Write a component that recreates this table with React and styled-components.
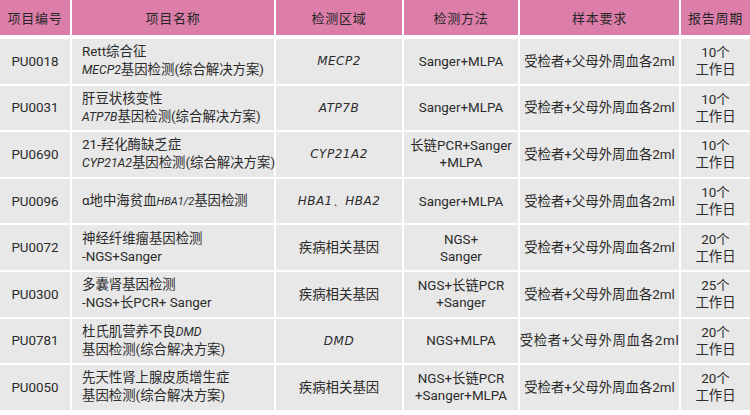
import * as React from 'react';
import styled, { createGlobalStyle } from 'styled-components';

const GlobalStyle = createGlobalStyle`
    html, body {
        margin: 0;
        padding: 0;
        background: #ffffff;
    }
    body {
        font-family: Roboto, "Noto Sans CJK SC", sans-serif;
        color: #2b2b2b;
    }
`;

const COLUMNS = '70px 202px 126px 114px 159px 69px';

const Page = styled.div`
    width: 750px;
    height: 415px;
    background: #ffffff;
    overflow: hidden;
`;

const Head = styled.div`
    display: grid;
    grid-template-columns: ${COLUMNS};
    column-gap: 2px;
    height: 35px;
`;

const HeadCell = styled.div`
    background: #dc7ea9;
    display: flex;
    align-items: center;
    justify-content: center;
    font-family: "Noto Sans CJK SC", sans-serif;
    font-size: 13px;
    font-weight: 400;
    letter-spacing: 0.8px;
    color: #262626;
`;

const Body = styled.div`
    margin-top: 4px;
    display: grid;
    grid-template-columns: ${COLUMNS};
    grid-auto-rows: 44.6px;
    gap: 2px;
`;

const Cell = styled.div`
    background: #e8e8e8;
    display: flex;
    align-items: center;
    justify-content: ${(p) => (p.$left ? 'flex-start' : 'center')};
    padding: ${(p) => (p.$left ? '0 0 0 10px' : '0')};
    color: #2b2b2b;
`;

const Text = styled.div`
    font-size: 13.4px;
    line-height: ${(p) => p.$lh || 17}px;
    text-align: ${(p) => (p.$left ? 'left' : 'center')};
    letter-spacing: ${(p) => (p.$spaced ? '0.7px' : '0')};
    white-space: nowrap;
`;

const Gene = styled.i`
    font-size: ${(p) => (p.$small ? '11px' : '12.2px')};
    font-style: italic;
`;

const Locus = styled.i`
    font-family: "DejaVu Sans", sans-serif;
    font-size: 12px;
    font-style: italic;
    letter-spacing: 0.5px;
    color: #2b2b2b;
`;

const columns = ['项目编号', '项目名称', '检测区域', '检测方法', '样本要求', '报告周期'];

const rows = [
    {
        code: 'PU0018',
        name: <>Rett综合征<br /><Gene>MECP2</Gene>基因检测(综合解决方案)</>,
        region: <Locus>MECP2</Locus>,
        method: 'Sanger+MLPA',
        days: '10',
    },
    {
        code: 'PU0031',
        name: <>肝豆状核变性<br /><Gene>ATP7B</Gene>基因检测(综合解决方案)</>,
        region: <Locus>ATP7B</Locus>,
        method: 'Sanger+MLPA',
        days: '10',
    },
    {
        code: 'PU0690',
        name: <>21-羟化酶缺乏症<br /><Gene>CYP21A2</Gene>基因检测(综合解决方案)</>,
        region: <Locus>CYP21A2</Locus>,
        method: <>长链PCR+Sanger<br />+MLPA</>,
        days: '10',
    },
    {
        code: 'PU0096',
        name: <>α地中海贫血<Gene $small>HBA1/2</Gene>基因检测</>,
        region: <Locus>HBA1、HBA2</Locus>,
        method: 'Sanger+MLPA',
        days: '10',
    },
    {
        code: 'PU0072',
        name: <>神经纤维瘤基因检测<br />-NGS+Sanger</>,
        region: '疾病相关基因',
        method: <>NGS+<br />Sanger</>,
        days: '20',
    },
    {
        code: 'PU0300',
        name: <>多囊肾基因检测<br />-NGS+长PCR+ Sanger</>,
        region: '疾病相关基因',
        method: <>NGS+长链PCR<br />+Sanger</>,
        days: '25',
    },
    {
        code: 'PU0781',
        name: <>杜氏肌营养不良<Gene>DMD</Gene><br />基因检测(综合解决方案)</>,
        region: <Locus>DMD</Locus>,
        method: 'NGS+MLPA',
        days: '20',
        wide: true,
    },
    {
        code: 'PU0050',
        name: <>先天性肾上腺皮质增生症<br />基因检测(综合解决方案)</>,
        region: '疾病相关基因',
        method: <>NGS+长链PCR<br />+Sanger+MLPA</>,
        days: '20',
    },
];

const ProductTable = () => {
    return (
        <Page>
            <GlobalStyle />
            <Head>
                {columns.map((c) => <HeadCell key={c}>{c}</HeadCell>)}
            </Head>
            <Body>
                {rows.map((r) => (
                    <React.Fragment key={r.code}>
                        <Cell><Text>{r.code}</Text></Cell>
                        <Cell $left><Text $left $lh={18}>{r.name}</Text></Cell>
                        <Cell><Text>{r.region}</Text></Cell>
                        <Cell><Text>{r.method}</Text></Cell>
                        <Cell><Text $spaced={r.wide}>受检者+父母外周血各2ml</Text></Cell>
                        <Cell><Text>{r.days}个<br />工作日</Text></Cell>
                    </React.Fragment>
                ))}
            </Body>
        </Page>
    );
};

export default ProductTable;
